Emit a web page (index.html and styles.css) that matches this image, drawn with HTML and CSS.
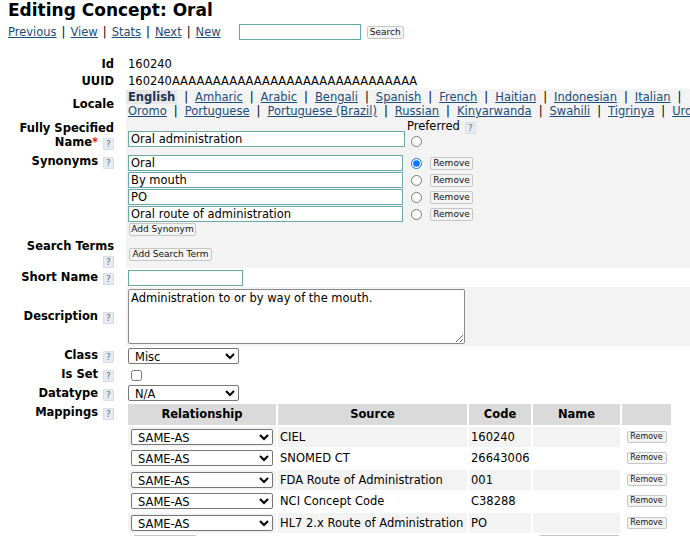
FILE: index.html
```html
<!DOCTYPE html>
<html>
<head>
  <meta charset="utf-8">
  <title>Editing Concept: Oral</title>
  <link rel="stylesheet" href="styles.css">
</head>
<body>
  <h2>Editing Concept: Oral</h2>

  <!-- Navigation + search -->
  <div class="nav">
    <a href="#">Previous</a><span class="bar">|</span><a href="#">View</a><span class="bar">|</span><a href="#">Stats</a><span class="bar">|</span><a href="#">Next</a><span class="bar">|</span><a href="#">New</a>
    <form class="search">
      <input type="text" class="text search-box">
      <button type="button" class="btn search-btn">Search</button>
    </form>
  </div>

  <table class="concept-form">
    <tr class="row-id">
      <th>Id</th>
      <td>160240</td>
    </tr>
    <tr class="row-uuid">
      <th>UUID</th>
      <td>160240AAAAAAAAAAAAAAAAAAAAAAAAAAAAAA</td>
    </tr>
    <tr class="row-locale">
      <th>Locale</th>
      <td class="shade">
        <div class="locales">
          <span class="current">English</span><span class="sep">|</span><a href="#">Amharic</a><span class="sep">|</span><a href="#">Arabic</a><span class="sep">|</span><a href="#">Bengali</a><span class="sep">|</span><a href="#">Spanish</a><span class="sep">|</span><a href="#">French</a><span class="sep">|</span><a href="#">Haitian</a><span class="sep">|</span><a href="#">Indonesian</a><span class="sep">|</span><a href="#">Italian</a><span class="sep">|</span>
        </div>
        <div class="locales">
          <a href="#">Oromo</a><span class="sep">|</span><a href="#">Portuguese</a><span class="sep">|</span><a href="#">Portuguese (Brazil)</a><span class="sep">|</span><a href="#">Russian</a><span class="sep">|</span><a href="#">Kinyarwanda</a><span class="sep">|</span><a href="#">Swahili</a><span class="sep">|</span><a href="#">Tigrinya</a><span class="sep">|</span><a href="#">Urdu</a>
        </div>
      </td>
    </tr>
    <tr class="row-fsn">
      <th>Fully Specified<br>Name<span class="required">*</span><span class="help">?</span></th>
      <td class="shade">
        <div class="fsn">
          <input type="text" class="text name-box" value="Oral administration">
          <div class="preferred">
            <div class="preferred-label">Preferred<span class="help">?</span></div>
            <input type="radio" name="preferred" class="radio">
          </div>
        </div>
      </td>
    </tr>
    <tr class="row-synonyms">
      <th>Synonyms<span class="help">?</span></th>
      <td class="shade">
        <div class="synonym">
          <input type="text" class="text name-box" value="Oral">
          <input type="radio" name="preferred" class="radio" checked>
          <button type="button" class="btn remove">Remove</button>
        </div>
        <div class="synonym">
          <input type="text" class="text name-box" value="By mouth">
          <input type="radio" name="preferred" class="radio">
          <button type="button" class="btn remove">Remove</button>
        </div>
        <div class="synonym">
          <input type="text" class="text name-box" value="PO">
          <input type="radio" name="preferred" class="radio">
          <button type="button" class="btn remove">Remove</button>
        </div>
        <div class="synonym">
          <input type="text" class="text name-box" value="Oral route of administration">
          <input type="radio" name="preferred" class="radio">
          <button type="button" class="btn remove">Remove</button>
        </div>
        <button type="button" class="btn add-synonym">Add Synonym</button>
      </td>
    </tr>
    <tr class="row-search-terms">
      <th>Search Terms<br><span class="help">?</span></th>
      <td class="shade">
        <button type="button" class="btn add-term">Add Search Term</button>
      </td>
    </tr>
    <tr class="row-short">
      <th>Short Name<span class="help">?</span></th>
      <td><input type="text" class="text short-box"></td>
    </tr>
    <tr class="row-description">
      <th>Description<span class="help">?</span></th>
      <td class="shade"><textarea class="description">Administration to or by way of the mouth.</textarea></td>
    </tr>
    <tr class="row-class">
      <th>Class<span class="help">?</span></th>
      <td>
        <select class="select small">
          <option>Misc</option>
        </select>
      </td>
    </tr>
    <tr class="row-set">
      <th>Is Set<span class="help">?</span></th>
      <td><input type="checkbox" class="checkbox"></td>
    </tr>
    <tr class="row-datatype">
      <th>Datatype<span class="help">?</span></th>
      <td>
        <select class="select small">
          <option>N/A</option>
        </select>
      </td>
    </tr>
    <tr class="row-mappings">
      <th>Mappings<span class="help">?</span></th>
      <td class="mappings">
        <table class="mapping-table">
          <tr>
            <th class="col-rel">Relationship</th>
            <th class="col-source">Source</th>
            <th class="col-code">Code</th>
            <th class="col-name">Name</th>
            <th class="col-action"></th>
          </tr>
          <tr class="odd">
            <td><select class="select wide"><option>SAME-AS</option></select></td>
            <td>CIEL</td>
            <td>160240</td>
            <td></td>
            <td class="action"><button type="button" class="btn remove-map">Remove</button></td>
          </tr>
          <tr>
            <td><select class="select wide"><option>SAME-AS</option></select></td>
            <td>SNOMED CT</td>
            <td>26643006</td>
            <td></td>
            <td class="action"><button type="button" class="btn remove-map">Remove</button></td>
          </tr>
          <tr class="odd">
            <td><select class="select wide"><option>SAME-AS</option></select></td>
            <td>FDA Route of Administration</td>
            <td>001</td>
            <td></td>
            <td class="action"><button type="button" class="btn remove-map">Remove</button></td>
          </tr>
          <tr>
            <td><select class="select wide"><option>SAME-AS</option></select></td>
            <td>NCI Concept Code</td>
            <td>C38288</td>
            <td></td>
            <td class="action"><button type="button" class="btn remove-map">Remove</button></td>
          </tr>
          <tr class="odd">
            <td><select class="select wide"><option>SAME-AS</option></select></td>
            <td>HL7 2.x Route of Administration</td>
            <td>PO</td>
            <td></td>
            <td class="action"><button type="button" class="btn remove-map">Remove</button></td>
          </tr>
          <tr class="footer">
            <td><button type="button" class="btn add-map">Add Mapping</button></td>
            <td></td>
            <td colspan="2"><button type="button" class="btn add-term-map">Add Term</button></td>
            <td></td>
          </tr>
        </table>
      </td>
    </tr>
  </table>
</body>
</html>
```

FILE: styles.css
```css
html {
  overflow: hidden;
}

body {
  margin: 0;
  padding: 0 8px;
  font-family: "DejaVu Sans", Verdana, sans-serif;
  font-size: 11.5px;
  color: #000;
  background-color: #fff;
}

a {
  color: #1b4d7e;
}

h2 {
  margin: 0;
  font-size: 17px;
  line-height: 20px;
}

/* top navigation */
.nav {
  display: flex;
  align-items: center;
  height: 20px;
  margin-top: 2px;
  white-space: nowrap;
}

.nav .bar {
  margin: 0 5px;
}

.search {
  display: flex;
  align-items: center;
  margin: 0 0 0 18px;
}

.search-box {
  width: 122px;
}

.search-btn {
  width: 37px;
  margin-left: 6px;
}

/* form inputs */
.text {
  box-sizing: border-box;
  height: 16px;
  border: 1px solid #6aa9a7;
  padding: 0 2px;
  font-family: inherit;
  font-size: 11.5px;
  background-color: #fff;
  outline: none;
}

.btn {
  box-sizing: border-box;
  height: 13px;
  padding: 0;
  border: 1px solid #c6c6c6;
  border-radius: 2px;
  background-color: #f4f4f4;
  font-family: inherit;
  font-size: 9px;
  line-height: 11px;
  color: #111;
}

.radio {
  width: 11px;
  height: 11px;
  margin: 0;
}

.checkbox {
  width: 11px;
  height: 11px;
  margin: 0 0 0 3px;
  vertical-align: middle;
}

.select {
  box-sizing: border-box;
  height: 16px;
  border: 1px solid #767676;
  border-radius: 2px;
  background-color: #fff;
  font-family: inherit;
  font-size: 11.5px;
  padding: 0 2px;
}

.select.small {
  width: 111px;
}

.select.wide {
  width: 142px;
}

/* main concept form */
.concept-form {
  border-collapse: collapse;
  width: max-content;
  margin-top: 13px;
}

.concept-form > tbody > tr > th {
  box-sizing: border-box;
  width: 118px;
  min-width: 118px;
  padding: 0 12px 0 0;
  text-align: right;
  font-weight: bold;
  line-height: 14px;
  white-space: nowrap;
}

.concept-form > tbody > tr > td {
  padding: 0 0 0 2px;
  line-height: 14px;
  white-space: nowrap;
}

.concept-form > tbody > tr > td.shade {
  background-color: #f3f3f3;
}

.help {
  display: inline-block;
  box-sizing: border-box;
  width: 11px;
  height: 12px;
  margin-left: 5px;
  border: 1px solid #d5dde5;
  background-color: #e5ebf1;
  color: #66717d;
  font-size: 9px;
  font-weight: normal;
  line-height: 10px;
  text-align: center;
  vertical-align: -1px;
}

.required {
  color: #e0201b;
}

.row-id td,
.row-uuid td {
  height: 17px;
}

.row-locale td {
  height: 30px;
  padding-top: 1px;
}

.locales {
  white-space: nowrap;
  line-height: 14px;
}

.locales .sep {
  margin: 0 7px;
}

.locales .current {
  font-weight: bold;
  color: #1c3557;
  background-color: #e7e7e7;
  padding: 0 2px;
  margin-left: -2px;
}

.row-fsn td {
  height: 32px;
}

.fsn {
  display: flex;
  align-items: flex-end;
  padding-bottom: 3px;
}

.name-box {
  width: 277px;
}

.synonym .name-box {
  width: 275px;
}

.preferred {
  margin-left: 2px;
}

.preferred-label {
  line-height: 12px;
}

.preferred .radio {
  display: block;
  margin: 2px 0 0 4px;
}

.row-synonyms th {
  vertical-align: top;
  padding-top: 3px !important;
}

.row-synonyms td {
  padding-top: 4px !important;
  padding-bottom: 3px !important;
}

.synonym {
  display: flex;
  align-items: center;
  height: 16px;
  margin-bottom: 1px;
}

.synonym .radio {
  margin-left: 8px;
}

.remove {
  width: 43px;
  margin-left: 8px;
}

.add-synonym {
  display: block;
  width: 67px;
  margin-left: 1px;
}

.row-search-terms th {
  vertical-align: top;
}

.row-search-terms td {
  height: 21px;
  vertical-align: top;
  padding-top: 7px !important;
}

.add-term {
  width: 83px;
  margin-left: 1px;
}

.row-short td {
  height: 19px;
}

.short-box {
  width: 115px;
  vertical-align: middle;
}

.row-description td {
  height: 59px;
}

.description {
  box-sizing: border-box;
  display: block;
  width: 337px;
  height: 55px;
  border: 1px solid #8a8a8a;
  border-radius: 2px;
  padding: 1px 2px;
  font-family: inherit;
  font-size: 11.5px;
  line-height: 14px;
}

.row-class td,
.row-set td {
  height: 19px;
}

.row-datatype td {
  height: 18px;
}

.row-mappings th {
  vertical-align: top;
  padding-top: 3px !important;
}

.concept-form > tbody > tr > td.mappings {
  padding: 0;
}

/* mapping table */
.mapping-table {
  border-collapse: separate;
  border-spacing: 2px;
}

.mapping-table th {
  height: 18px;
  padding: 0;
  background-color: #dadada;
  font-weight: bold;
  text-align: center;
}

.col-rel { width: 148px; }
.col-source { width: 189px; }
.col-code { width: 62px; }
.col-name { width: 87px; }
.col-action { width: 49px; }

.mapping-table td {
  height: 19.5px;
  padding: 0 0 0 2px;
  white-space: nowrap;
}

.mapping-table tr.odd td {
  background-color: #f3f3f3;
}

.mapping-table tr.odd td.action {
  background-color: transparent;
}

.mapping-table td:first-child {
  padding-left: 3px;
}

.mapping-table td .select {
  display: block;
}

.mapping-table td.action {
  text-align: center;
  padding: 0;
}

.remove-map {
  display: block;
  margin: 0 auto;
  width: 40px;
  height: 12px;
  font-size: 8px;
  line-height: 10px;
}

.mapping-table tr.footer td {
  vertical-align: top;
  padding-top: 0;
}

.add-map {
  width: 64px;
  height: 16px;
  margin-left: 2px;
}

.add-term-map {
  width: 81px;
  height: 16px;
  margin-left: 68px;
}
```
